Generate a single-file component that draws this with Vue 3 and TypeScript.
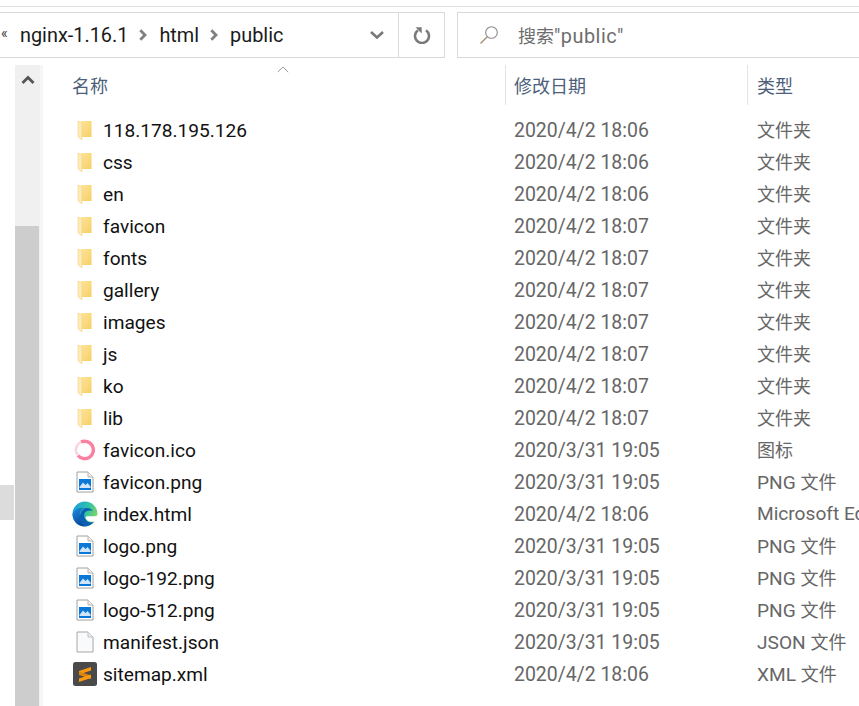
<script setup lang="ts">
type Kind = 'folder' | 'ico' | 'png' | 'edge' | 'file' | 'sublime'
interface Row { name: string; date: string; latin: string; cjk: string; kind: Kind }
const rows: Row[] = [
  { name: '118.178.195.126', date: '2020/4/2 18:06', latin: '', cjk: '文件夹', kind: 'folder' },
  { name: 'css', date: '2020/4/2 18:06', latin: '', cjk: '文件夹', kind: 'folder' },
  { name: 'en', date: '2020/4/2 18:06', latin: '', cjk: '文件夹', kind: 'folder' },
  { name: 'favicon', date: '2020/4/2 18:07', latin: '', cjk: '文件夹', kind: 'folder' },
  { name: 'fonts', date: '2020/4/2 18:07', latin: '', cjk: '文件夹', kind: 'folder' },
  { name: 'gallery', date: '2020/4/2 18:07', latin: '', cjk: '文件夹', kind: 'folder' },
  { name: 'images', date: '2020/4/2 18:07', latin: '', cjk: '文件夹', kind: 'folder' },
  { name: 'js', date: '2020/4/2 18:07', latin: '', cjk: '文件夹', kind: 'folder' },
  { name: 'ko', date: '2020/4/2 18:07', latin: '', cjk: '文件夹', kind: 'folder' },
  { name: 'lib', date: '2020/4/2 18:07', latin: '', cjk: '文件夹', kind: 'folder' },
  { name: 'favicon.ico', date: '2020/3/31 19:05', latin: '', cjk: '图标', kind: 'ico' },
  { name: 'favicon.png', date: '2020/3/31 19:05', latin: 'PNG ', cjk: '文件', kind: 'png' },
  { name: 'index.html', date: '2020/4/2 18:06', latin: 'Microsoft Edge HTML Document', cjk: '', kind: 'edge' },
  { name: 'logo.png', date: '2020/3/31 19:05', latin: 'PNG ', cjk: '文件', kind: 'png' },
  { name: 'logo-192.png', date: '2020/3/31 19:05', latin: 'PNG ', cjk: '文件', kind: 'png' },
  { name: 'logo-512.png', date: '2020/3/31 19:05', latin: 'PNG ', cjk: '文件', kind: 'png' },
  { name: 'manifest.json', date: '2020/3/31 19:05', latin: 'JSON ', cjk: '文件', kind: 'file' },
  { name: 'sitemap.xml', date: '2020/4/2 18:06', latin: 'XML ', cjk: '文件', kind: 'sublime' },
]
</script>

<template>
  <div class="window">
    <div class="topline"></div>
    <div class="toolbar">
      <div class="address">
        <span class="more">«</span>
        <span class="crumb">nginx-1.16.1</span>
        <svg class="chev" width="8" height="12" viewBox="0 0 8 12"><path d="M1.300 1.200 6 6l-4.700 4.800" fill="none" stroke="#808080" stroke-width="2.800"/></svg>
        <span class="crumb">html</span>
        <svg class="chev" width="8" height="12" viewBox="0 0 8 12"><path d="M1.300 1.200 6 6l-4.700 4.800" fill="none" stroke="#808080" stroke-width="2.800"/></svg>
        <span class="crumb">public</span>
        <svg class="drop" width="16" height="10" viewBox="0 0 16 10"><path d="M2 2l6 5.500L14 2" fill="none" stroke="#777" stroke-width="2.600"/></svg>
        <div class="refresh">
          <svg width="18" height="18" viewBox="0 0 18 18"><path d="M5 4.200a7 7 0 1 0 8 0" fill="none" stroke="#7a7a7a" stroke-width="2.600"/><path d="M2.500 1.200h6.200v6.200z" fill="#7a7a7a"/></svg>
        </div>
      </div>
      <div class="search">
        <svg width="20" height="20" viewBox="0 0 20 20"><circle cx="12.500" cy="7.500" r="5.800" fill="none" stroke="#8a8a8a" stroke-width="1.100"/><path d="M8.300 11.700 1.500 18.500" stroke="#a98f73" stroke-width="1.400"/></svg>
        <span class="search-text"><span class="cjk">搜索</span>"public"</span>
      </div>
    </div>
    <div class="main">
      <div class="edge-strip"><div class="strip-thumb"></div></div>
      <div class="scrollbar">
        <svg width="14" height="10" viewBox="0 0 14 10"><path d="M1.500 8 7 2.500 12.500 8" fill="none" stroke="#555" stroke-width="2.800"/></svg>
        <div class="thumb"></div>
      </div>
      <div class="gutter"></div>
      <div class="list">
        <div class="head">
          <svg class="sort" width="12" height="7" viewBox="0 0 12 7"><path d="M.8 6 6 1l5.200 5" fill="none" stroke="#9a9a9a" stroke-width="1"/></svg>
          <div class="hcell h-name">名称</div>
          <div class="hcell h-date">修改日期</div>
          <div class="hcell h-type">类型</div>
        </div>
        <div v-for="row in rows" :key="row.name" class="row">
          <div class="icon">
            <svg v-if="row.kind === 'folder'" class="folder" width="16" height="21" viewBox="0 0 16 21">
              <defs>
                <linearGradient id="fb" x1="0" y1="0" x2="1" y2="1"><stop offset="0" stop-color="#fde59a"/><stop offset="1" stop-color="#f6cf66"/></linearGradient>
              </defs>
              <path d="M4 1h10.500v16H4z" fill="url(#fb)"/>
              <path d="M1 1l4 2v17l-4-3z" fill="#fdebb4" stroke="#eccb7c" stroke-width=".5"/>
            </svg>
            <svg v-else-if="row.kind === 'ico'" width="22" height="22" viewBox="0 0 22 22">
              <path d="M7 3A8.700 8.700 0 1 1 4 16.500" fill="none" stroke="#fb7f9f" stroke-width="3.400"/>
              <path d="M4 16.500A8.700 8.700 0 0 1 7 3" fill="none" stroke="#fbd3dd" stroke-width="2.400"/>
            </svg>
            <svg v-else-if="row.kind === 'png'" width="18" height="22" viewBox="0 0 18 22">
              <path d="M1 1h11l5 5v15H1z" fill="#fff" stroke="#a0a0a0"/>
              <path d="M12 1v5h5" fill="#eee" stroke="#b5b5b5"/>
              <rect x="3" y="8" width="12" height="11" fill="#0a78d7"/>
              <path d="M3.500 16l3.500-4.500 2.500 2.500 2-2 3 3.500v1.500H3.500z" fill="#cfe6fa"/>
            </svg>
            <svg v-else-if="row.kind === 'edge'" width="26" height="26" viewBox="0 0 26 26">
              <defs>
                <linearGradient id="eg" x1="0" y1=".2" x2="1" y2=".6"><stop offset="0" stop-color="#1b9de2"/><stop offset=".55" stop-color="#30c3a6"/><stop offset="1" stop-color="#86d85c"/></linearGradient>
                <linearGradient id="eb" x1="0" y1="0" x2=".4" y2="1"><stop offset="0" stop-color="#1c8fe0"/><stop offset="1" stop-color="#0b4a9e"/></linearGradient>
              </defs>
              <path d="M.5 13a12.500 12.500 0 0 1 25 0c0 1.500-1 2.200-3 2.200h-7c-1.500 0-2.200 1-1.700 2.200 1 2.500 4.500 4 8.500 3-2.300 2.600-5.500 5-9.300 5.100C6 25.500.5 20 .5 13z" fill="url(#eg)"/>
              <path d="M.5 13C2 8.500 7 6 12.500 6.800 9 8.500 7.500 11.500 8 15c.5 4.500 2.800 8.500 4.800 10.500C6 25.500.5 20 .5 13z" fill="url(#eb)"/>
              <path d="M8 15c.5-4 3-7.500 6-8 3-.4 5.500.8 7 3-3-.8-7.500-.5-8.500 2.500-.8 2.500 0 4.500 1.300 5.900 1 2.500 4.500 3.500 8.200 2.700-2.300 2.600-5.500 4.400-9.200 4.400C10.500 23.500 7.500 19.500 8 15z" fill="#0d5fb4"/>
            </svg>
            <svg v-else-if="row.kind === 'file'" width="18" height="22" viewBox="0 0 18 22">
              <path d="M1 1h11l5 5v15H1z" fill="#f9fafb" stroke="#a6a6a6"/>
              <path d="M12 1v5h5" fill="#eee" stroke="#c0c0c0"/>
            </svg>
            <svg v-else width="24" height="24" viewBox="0 0 24 24">
              <rect width="24" height="24" rx="2.500" fill="#4a4a4a"/>
              <path d="M18 5 6 9v3.500l12-4z" fill="#fb9a0e"/>
              <path d="M6 9.500l12 4V17L6 13z" fill="#e08508"/>
              <path d="M18 12.500 6 16.500V20l12-4z" fill="#fb9a0e"/>
            </svg>
          </div>
          <div class="name">{{ row.name }}</div>
          <div class="date">{{ row.date }}</div>
          <div class="type">{{ row.latin }}<span class="cjk">{{ row.cjk }}</span></div>
        </div>
      </div>
    </div>
  </div>
</template>

<style>
html, body { margin: 0; background: #fff; overflow: hidden; }
</style>

<style scoped>
.window {
  width: 859px;
  height: 706px;
  overflow: hidden;
  background: #fff;
  display: flex;
  flex-direction: column;
  font-family: Roboto, "Noto Sans CJK SC", sans-serif;
  font-size: 19.130px;
  color: #111;
  white-space: nowrap;
}
.cjk { font-size: 18px; letter-spacing: 0; }
.topline { height: 1px; margin-top: 6px; background: #e3e3e3; }
.toolbar { display: flex; margin-top: 5px; height: 46px; flex: none; }
.address {
  width: 446px;
  box-sizing: border-box;
  margin-left: -1px;
  border: 1px solid #d9d9d9;
  display: flex;
  align-items: center;
  position: relative;
}
.more { font-size: 14px; color: #333; margin-left: 1px; width: 19px; margin-top: -4px; }
.crumb { color: #1a1a1a; font-size: 19.870px; }
.chev { margin: 0 12px 0 11px; }
.drop { margin-left: auto; margin-right: 13px; }
.refresh {
  width: 45px;
  height: 100%;
  border-left: 1px solid #d9d9d9;
  display: flex;
  align-items: center;
  justify-content: center;
}
.search {
  margin-left: 12px;
  flex: 1;
  margin-right: -4px;
  border: 1px solid #d9d9d9;
  display: flex;
  align-items: center;
  padding-left: 21px;
}
.search-text { margin-left: 19px; color: #6d6d6d; font-size: 19.870px; letter-spacing: .5px; }
.main { display: flex; margin-top: 7px; flex: 1; min-height: 0; }
.edge-strip { width: 15px; flex: none; }
.strip-thumb { margin-top: 420px; height: 35px; width: 14px; background: #dcdcdc; }
.scrollbar {
  width: 25px;
  flex: none;
  background: #f0f0f0;
  display: flex;
  flex-direction: column;
  align-items: center;
  padding-top: 10px;
  box-sizing: border-box;
}
.thumb { margin-top: 141px; flex: 1; align-self: stretch; background: #cdcdcd; margin-right: 1px; }
.gutter { width: 3px; flex: none; background: #f6f6f6; }
.list { flex: 1; min-width: 0; overflow: hidden; }
.head {
  height: 40px;
  display: flex;
  position: relative;
  margin-bottom: 9px;
  color: #4c607a;
}
.sort { position: absolute; left: 234px; top: 1px; }
.hcell { font-size: 18px; display: flex; align-items: center; height: 40px; box-sizing: border-box; }
.h-name { width: 462px; padding-left: 29px; }
.h-date { width: 242px; padding-left: 8px; border-left: 1px solid #e3e3e3; }
.h-type { padding-left: 9px; border-left: 1px solid #e3e3e3; }
.row { display: flex; height: 32px; align-items: center; }
.icon {
  width: 60px;
  flex: none;
  display: flex;
  justify-content: center;
  align-items: center;
  height: 32px;
  box-sizing: border-box;
  padding-left: 27px;
  padding-right: 3px;
}
.icon svg { flex: none; }
.folder { margin-right: 1px; }
.name { width: 411px; flex: none; color: #111; }
.date { width: 243px; flex: none; color: #666; font-size: 19.450px; }
.type { flex: none; color: #666; margin-bottom: 2px; }
</style>
